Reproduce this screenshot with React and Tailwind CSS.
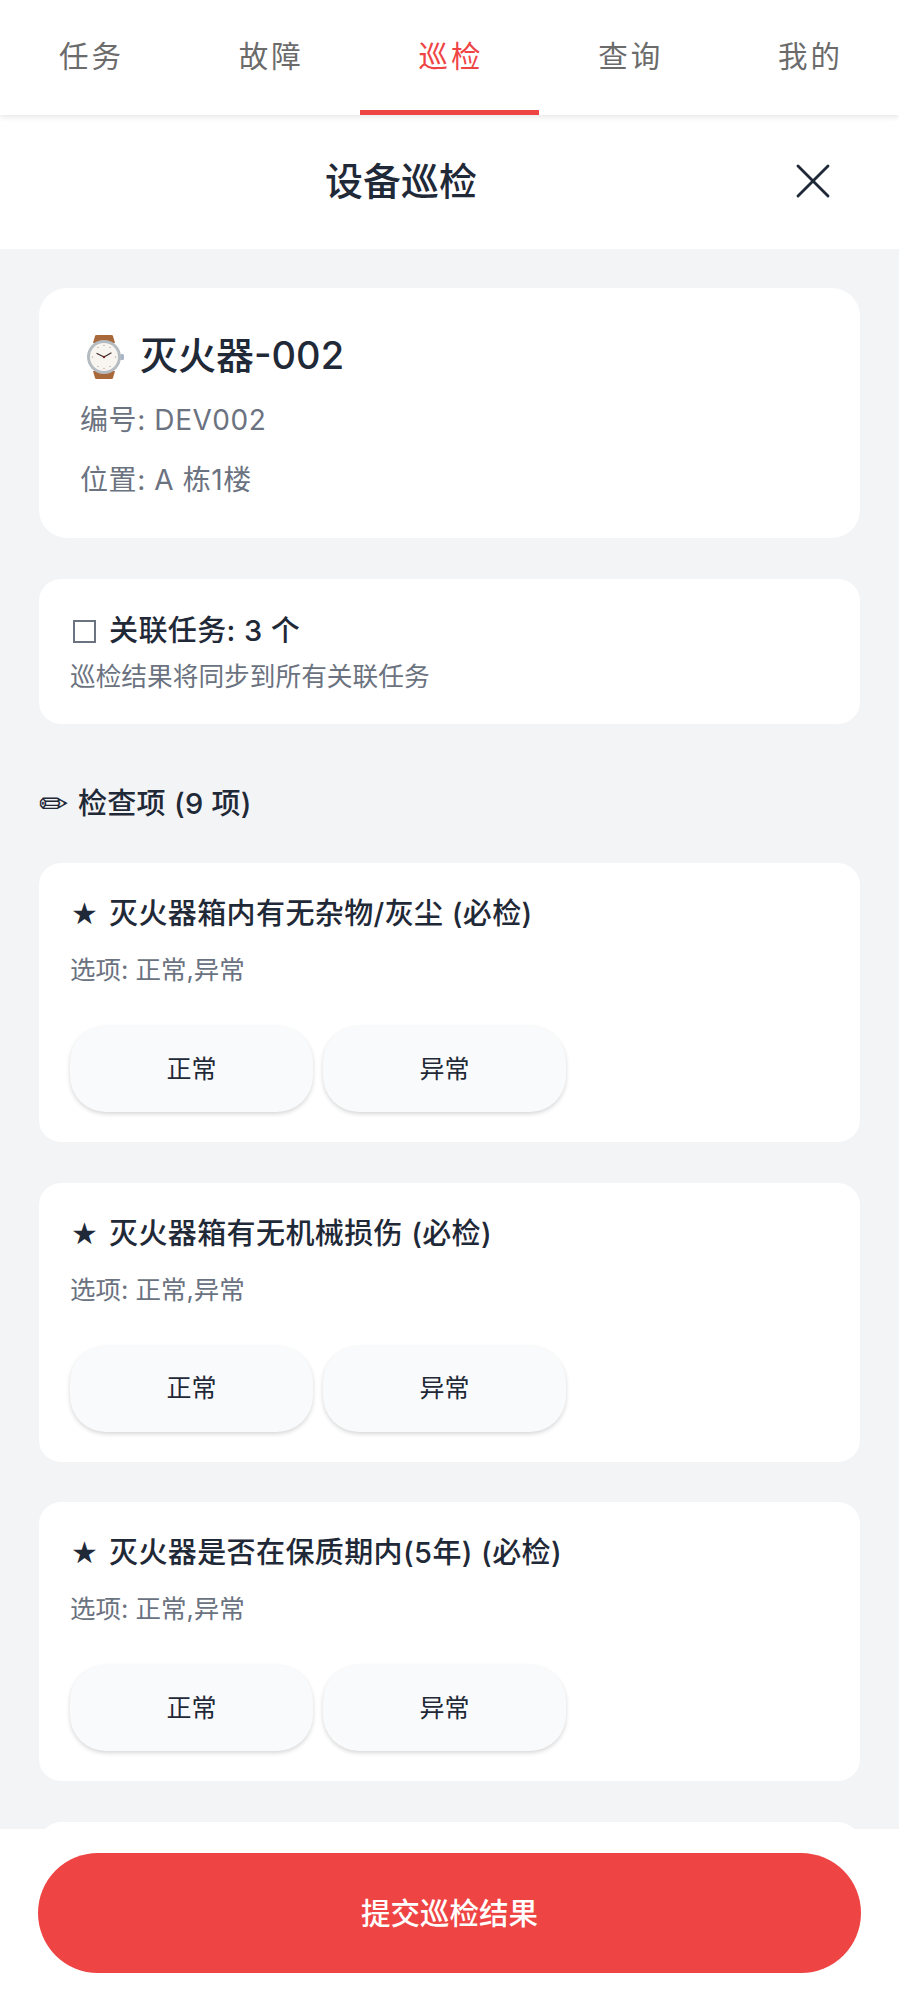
import React from 'react';
import { X } from 'lucide-react';

const tabs = ['任务', '故障', '巡检', '查询', '我的'];

const checkItems = [
  '灭火器箱内有无杂物/灰尘 (必检)',
  '灭火器箱有无机械损伤 (必检)',
  '灭火器是否在保质期内(5年) (必检)',
];

// emoji font isn't available, so the watch is drawn by hand
function WatchIcon() {
  return (
    <svg viewBox="0 0 40 44" className="w-[40px] h-[44px] shrink-0">
      <path d="M9 8 L11 1 Q11 0 13 0 L27 0 Q29 0 29 1 L31 8 Z" fill="#a9683a" />
      <path d="M9 36 L31 36 L29 43 Q29 44 27 44 L13 44 Q11 44 11 43 Z" fill="#a9683a" />
      <rect x="36" y="19" width="4" height="6" rx="1.5" fill="#a8b4c8" />
      <circle cx="20" cy="22" r="17" fill="#b4bcc2" />
      <circle cx="20" cy="22" r="14" fill="#f8f5f0" />
      <path d="M20 22 L13 18.5 M20 22 L27 18" stroke="#3a2a2a" strokeWidth="1.2" strokeLinecap="round" />
      <circle cx="20" cy="22" r="1.2" fill="#7a2a20" />
      <g fill="#b9a9a0">
        <circle cx="20" cy="10.5" r="0.7" />
        <circle cx="20" cy="33.5" r="0.7" />
        <circle cx="8.5" cy="22" r="0.7" />
        <circle cx="31.5" cy="22" r="0.7" />
        <circle cx="26" cy="12.5" r="0.7" />
        <circle cx="14" cy="12.5" r="0.7" />
        <circle cx="26" cy="31.5" r="0.7" />
        <circle cx="14" cy="31.5" r="0.7" />
      </g>
    </svg>
  );
}

function CheckItem({ title }) {
  return (
    <div className="bg-white rounded-[22px] pt-[31px] pb-[30px] pl-[31px] pr-[32px] shrink-0">
      <div className="flex items-center h-[40px] text-[29px] tracking-[0.4px] font-medium text-[#1f2937]">
        <span className="w-[39px] text-[30px] font-['DejaVu_Sans'] leading-none pl-[1px]">★</span>
        <span>{title}</span>
      </div>
      <div className="mt-[18px] h-[36px] leading-[36px] text-[25.5px] text-[#6b7280]">
        选项: 正常,异常
      </div>
      <div className="mt-[38px] flex gap-[10px]">
        {['正常', '异常'].map((opt) => (
          <button
            key={opt}
            className="w-[243px] h-[86px] rounded-[36px] bg-[#f9fafb] text-[25px] pt-[1px] text-[#1f2937] shadow-[0_2px_4px_rgba(0,0,0,0.16)]"
          >
            {opt}
          </button>
        ))}
      </div>
    </div>
  );
}

export default function App() {
  return (
    <div className="h-[1998px] flex flex-col overflow-hidden bg-white font-['Inter','Noto_Sans_CJK_SC','Noto_Sans',sans-serif]">
      {/* top tabs */}
      <div className="relative z-10 h-[115px] shrink-0 grid grid-cols-5 bg-white shadow-[0_2px_6px_rgba(0,0,0,0.1)]">
        {tabs.map((tab, i) => (
          <div
            key={tab}
            className={
              i === 2
                ? 'flex items-start justify-center pt-[36px] pl-[3px] text-[29.5px] leading-[40px] tracking-[3px] text-[#ef4444] border-b-[5px] border-[#ef4444]'
                : 'flex items-start justify-center pt-[36px] pl-[3px] text-[29.5px] leading-[40px] tracking-[3px] text-[#6b6b6b]'
            }
          >
            {tab}
          </div>
        ))}
      </div>

      {/* page header */}
      <div className="h-[134px] shrink-0 flex items-center bg-white">
        <div className="flex-1 text-center text-[38px] font-medium leading-[50px] -mt-[2px] text-[#1f2937]">设备巡检</div>
        <div className="w-[97px] flex items-center">
          <X className="w-[60px] h-[60px] -ml-[19px] -mt-[2px] text-[#1f2937]" strokeWidth={1.15} />
        </div>
      </div>

      {/* scroll area */}
      <div className="flex-1 min-h-0 overflow-hidden bg-[#f3f4f6] pt-[39px] px-[39px]">
        <div className="bg-white rounded-[28px] pt-[41px] pb-[28px] pl-[41px] pr-[42px]">
          <div className="flex items-center h-[52px] mb-[9px] text-[38px] font-medium text-[#1f2937]">
            <span className="ml-[4px] mr-[16px] mt-[3px] flex"><WatchIcon /></span>
            <span>灭火器-002</span>
          </div>
          <div className="text-[28px] tracking-[0.6px] leading-[60px] text-[#6b7280]">编号: DEV002</div>
          <div className="text-[28px] tracking-[0.6px] leading-[60px] text-[#6b7280]">位置: A 栋1楼</div>
        </div>

        <div className="mt-[41px] bg-white rounded-[22px] pt-[32px] pb-[28px] pl-[31px] pr-[32px]">
          <div className="flex items-center h-[40px] text-[29px] tracking-[0.4px] font-medium text-[#1f2937]">
            <span className="w-[39px] h-[24px] flex items-center">
              <span className="block w-[23px] h-[23px] ml-[3px] border-2 border-[#6b7280]" />
            </span>
            <span>关联任务: 3 个</span>
          </div>
          <div className="mt-[8px] mb-[1px] h-[36px] leading-[36px] text-[25.7px] text-[#6b7280]">巡检结果将同步到所有关联任务</div>
        </div>

        <div className="mt-[60px] mb-[39px] flex items-center h-[40px] text-[29px] tracking-[0.3px] font-medium text-[#1f2937]">
          <span className="w-[39px] text-[35px] font-['DejaVu_Sans'] font-normal leading-none">✏</span>
          <span>检查项 (9 项)</span>
        </div>

        <div className="flex flex-col gap-[40.5px]">
          {checkItems.map((item) => (
            <CheckItem key={item} title={item} />
          ))}
          {/* next item is scrolled under the submit bar, only its top edge shows */}
          <div className="bg-white rounded-[22px] h-[279px] shrink-0" />
        </div>
      </div>

      {/* submit bar */}
      <div className="h-[169px] shrink-0 bg-white px-[38px] pt-[24px]">
        <button className="w-full h-[120px] rounded-full bg-[#ef4444] text-white text-[29.5px] font-medium">
          提交巡检结果
        </button>
      </div>
    </div>
  );
}
